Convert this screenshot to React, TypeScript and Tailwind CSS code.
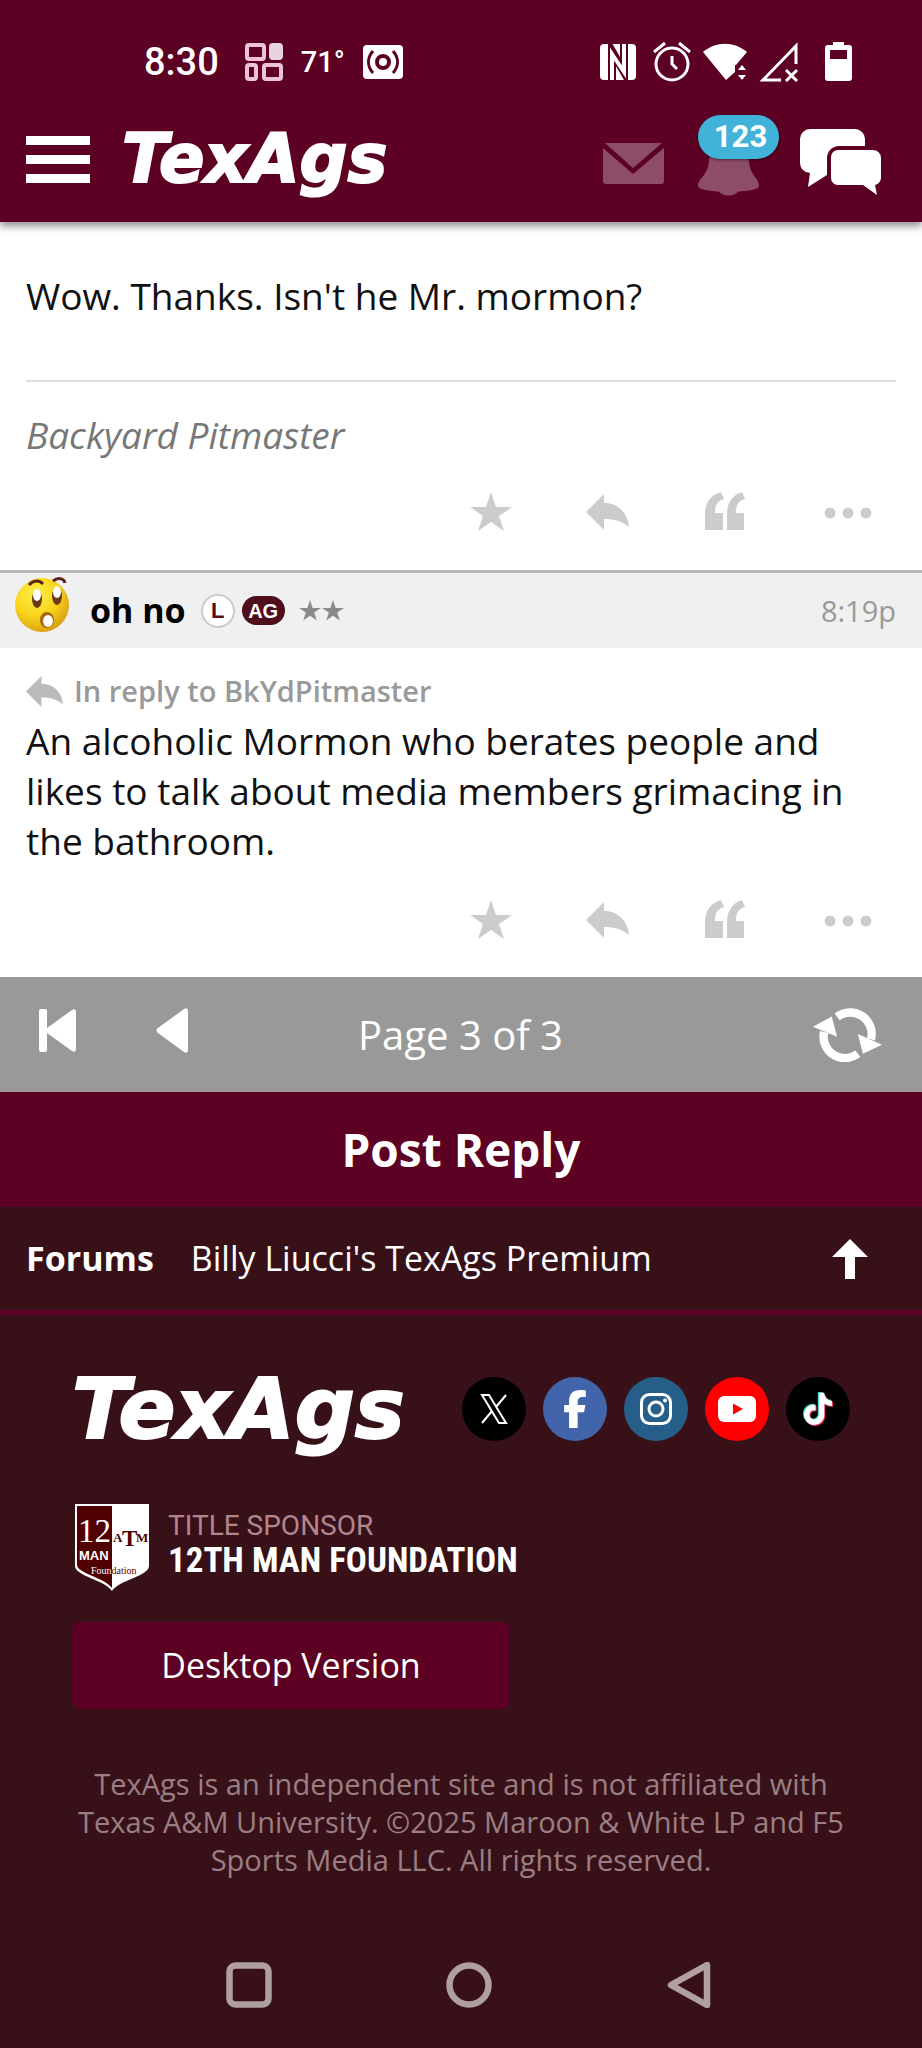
import type { ReactNode } from "react";
import { FaFacebookF, FaTiktok } from "react-icons/fa6";

const sans = "font-['Open_Sans',sans-serif]";
const roboto = "font-['Roboto',sans-serif]";
const wordmark = "font-['DejaVu_Sans',sans-serif] font-bold italic leading-[76px] text-white [-webkit-text-stroke:2px_white]";

function StatusBar() {
  return (
    <div className={`${roboto} flex h-[40px] items-center justify-between pl-[144px] pr-[70px] text-white`}>
      <div className="flex items-center">
        <span className="text-[38px] font-medium leading-[40px]">8:30</span>
        <svg className="ml-[26px] h-[38px] w-[38px]" viewBox="0 0 38 38" fill="none" stroke="#efc3d6" strokeWidth="4">
          <rect x="2" y="2" width="17" height="14" rx="2" />
          <rect x="25" y="1" width="12" height="15" rx="3" fill="#e6d5de" stroke="#e6d5de" strokeWidth="2" />
          <rect x="2" y="22" width="9" height="14" rx="2" />
          <rect x="19" y="22" width="17" height="14" rx="2" />
        </svg>
        <span className="ml-[18px] text-[29px] font-medium leading-[40px]">71°</span>
        <svg className="ml-[18px] h-[34px] w-[40px]" viewBox="0 0 40 34" fill="none">
          <rect width="40" height="34" rx="4" fill="#fff" />
          <circle cx="20" cy="17" r="6" stroke="#5c0024" strokeWidth="4" />
          <path d="M10 6c-6 7-6 15 0 22M30 6c6 7 6 15 0 22" stroke="#5c0024" strokeWidth="3" />
        </svg>
      </div>

      <div className="flex items-center">
        {/* nfc */}
        <svg className="h-[40px] w-[36px]" viewBox="0 0 36 40" fill="none">
          <rect y="2" width="36" height="36" rx="4" fill="#fff" />
          <path d="M12 38V9l12 21V2" stroke="#5c0024" strokeWidth="8" />
          <path d="M12 38V12l12 18V2" stroke="#fff" strokeWidth="4" />
        </svg>
        {/* alarm */}
        <svg className="ml-[16px] h-[40px] w-[40px]" viewBox="0 0 40 40" fill="none" stroke="#fff" strokeWidth="3">
          <circle cx="20" cy="22" r="16" />
          <path d="M20 14v8l5 5M2 10l11-9M27 1l11 9" />
        </svg>
        {/* wifi */}
        <svg className="ml-[11px] h-[40px] w-[44px]" viewBox="0 0 44 40" fill="#fff">
          <path d="M0 10C13-1 31-1 44 10L33 23h-1v7l-9 8z" />
          <path d="M35 28l4-5 4 5zM35 33l4 5 4-5z" />
        </svg>
        {/* signal, no service */}
        <svg className="ml-[12px] h-[40px] w-[40px]" viewBox="0 0 40 40" fill="none" stroke="#fff" strokeWidth="3">
          <path d="M22 38H4L37 4v18" />
          <path d="M27 28l11 11M38 28L27 39" />
        </svg>
        {/* battery */}
        <svg className="ml-[26px] h-[40px] w-[27px]" viewBox="0 0 27 40">
          <path fill="#fff" fillRule="evenodd" d="M8 0h11v3h5a3 3 0 0 1 3 3v30a3 3 0 0 1-3 3H3a3 3 0 0 1-3-3V6a3 3 0 0 1 3-3h5zM5 8v9h17V8z" />
        </svg>
      </div>
    </div>
  );
}

function SiteHeader() {
  return (
    <header className="relative z-10 bg-[#5c0024] pt-[42px] shadow-[0_4px_8px_rgba(0,0,0,0.45)]">
      <StatusBar />
      <div className="flex h-[140px] items-end justify-between pb-[25px] pl-[26px] pr-[41px]">
        <div className="flex items-center">
          <button aria-label="Menu" className="flex w-[64px] flex-col gap-[10px]">
            <span className="h-[9px] bg-white" />
            <span className="h-[9px] bg-white" />
            <span className="h-[9px] bg-white" />
          </button>
          <a href="#" className={`${wordmark} ml-[32px] text-[67px]`}>
            TexAgs
          </a>
        </div>

        <div className="flex items-end">
          <button aria-label="Messages">
            <svg className="h-[68px] w-[61px]" viewBox="0 0 61 68" fill="#8d4d68">
              <path d="M2 14h57L30 39zM0 19l30 26 31-26v33a3 3 0 0 1-3 3H3a3 3 0 0 1-3-3z" />
            </svg>
          </button>
          <button aria-label="Notifications" className="relative ml-[34px]">
            <svg className="h-[68px] w-[62px]" viewBox="0 0 63 68" fill="#8d4d68">
              <path d="M31 8C16 8 12 20 11 34 10 46 0 50 0 57c0 4 10 5 21 6 2 3 6 4 10 4s8-1 10-4c11-1 21-2 21-6 0-7-9-11-10-23C51 20 46 8 31 8z" />
            </svg>
            <span
              className={`${roboto} absolute bottom-[38px] left-0 flex h-[44px] w-[81px] items-center justify-center rounded-full bg-[#42b3d8] pl-1 text-[31px] font-bold text-white shadow-[0_1px_3px_rgba(0,0,0,0.5)]`}
            >
              123
            </span>
          </button>
          <button aria-label="Forums" className="ml-[40px]">
            <svg className="h-[68px] w-[81px]" viewBox="0 0 81 68" fill="#fff">
              <path d="M10 0h45a10 10 0 0 1 10 10v7H39a12 12 0 0 0-12 12v17L8 58l2-14a10 10 0 0 1-10-10V10A10 10 0 0 1 10 0z" />
              <path d="M38 21h35a8 8 0 0 1 8 8v19a8 8 0 0 1-6 8l2 10-14-10H38a7 7 0 0 1-7-7V28a7 7 0 0 1 7-7z" />
            </svg>
          </button>
        </div>
      </div>
    </header>
  );
}

function ReplyArrow({ className }: { className: string }) {
  return (
    <svg className={className} viewBox="0 0 43 36" fill="currentColor">
      <path d="M0 18L18 0v9c14 0 24 10 25 24-7-6-15-8-25-8v11z" />
    </svg>
  );
}

function PostActions() {
  return (
    <div className="flex h-[40px] items-center justify-end pr-[24px] text-[#ccc]">
      <button aria-label="Star">
        <svg className="h-[40px] w-[42px]" viewBox="0 0 42 40" fill="currentColor">
          <path d="M21 0l5 15h16L29 24l5 15-13-9-13 9 5-15L0 15h16z" />
        </svg>
      </button>
      <button aria-label="Reply" className="ml-[74px]">
        <ReplyArrow className="h-[36px] w-[43px]" />
      </button>
      <button aria-label="Quote" className="ml-[76px]">
        <svg className="h-[40px] w-[40px]" viewBox="0 0 40 40" fill="currentColor">
          <path d="M0 38V22C0 10 6 3 16 0l3 7c-7 2-9 6-9 14h8v17z" />
          <path d="M22 38V22C22 10 28 3 37 0l3 7c-7 2-9 6-9 14h8v17z" />
        </svg>
      </button>
      <button aria-label="More" className="ml-[79px]">
        <svg className="h-[40px] w-[48px]" viewBox="0 0 48 40" fill="currentColor">
          <circle cx="6" cy="21" r="5.5" />
          <circle cx="24" cy="21" r="5.5" />
          <circle cx="42" cy="21" r="5.5" />
        </svg>
      </button>
    </div>
  );
}

function Avatar() {
  return (
    <svg className="h-[56px] w-[56px]" viewBox="0 0 56 56">
      <defs>
        <radialGradient id="face" cx="0.38" cy="0.3" r="0.75">
          <stop offset="0" stopColor="#fff04a" />
          <stop offset="0.55" stopColor="#f8d41a" />
          <stop offset="1" stopColor="#d99a12" />
        </radialGradient>
      </defs>
      <circle cx="28" cy="28" r="27" fill="url(#face)" />
      <path d="M15 8c4-5 10-5 14-1M39 4c5-4 11-3 12 2" fill="none" stroke="#5e2413" strokeWidth="3" />
      <ellipse cx="23" cy="22" rx="5" ry="9" fill="#6b3a16" />
      <ellipse cx="23" cy="18" rx="4" ry="6" fill="#fff" />
      <ellipse cx="43" cy="19" rx="5" ry="9" fill="#6b3a16" />
      <ellipse cx="43" cy="15" rx="4" ry="6" fill="#fff" />
      <ellipse cx="33" cy="43" rx="7" ry="8" fill="#a8660f" />
      <ellipse cx="34" cy="44" rx="5" ry="6" fill="#fff" />
    </svg>
  );
}

function Star() {
  return (
    <svg className="h-[21px] w-[22px]" viewBox="0 0 42 40" fill="#8b8b8b">
      <path d="M21 0l5 15h16L29 24l5 15-13-9-13 9 5-15L0 15h16z" />
    </svg>
  );
}

function Pager() {
  return (
    <nav className="grid h-[115px] grid-cols-3 items-center bg-[#999] pl-[39px] pr-[40px] text-white">
      <div className="flex items-center pb-2">
        <button aria-label="First page">
          <svg className="h-[45px] w-[37px]" viewBox="0 0 37 45" fill="#fff">
            <rect y="1" width="8" height="43" rx="2" />
            <path d="M8 20L33 2q4-2 4 2v37q0 4-4 2L8 25z" />
          </svg>
        </button>
        <button aria-label="Previous page" className="ml-[80px]">
          <svg className="h-[45px] w-[32px]" viewBox="0 0 32 45" fill="#fff">
            <path d="M2 20L28 1q4-2 4 2v39q0 4-4 2L2 25q-3-3 0-5z" />
          </svg>
        </button>
      </div>
      <span className="text-center text-[40px] leading-[50px]">Page 3 of 3</span>
      <button aria-label="Refresh" className="justify-self-end">
        <svg className="h-[54px] w-[69px]" viewBox="1056 143 206 160" fill="none" stroke="#fff" strokeWidth="25">
          <path d="M1128 169A64 64 0 0 1 1229 236" />
          <path d="M1089 214A64 64 0 0 0 1190 279" />
          <path d="M1190 220L1262 252 1205 279zM1056 198L1112 168 1128 228z" fill="#fff" stroke="none" />
        </svg>
      </button>
    </nav>
  );
}

function Social({ label, color, children }: { label: string; color: string; children: ReactNode }) {
  return (
    <a href="#" aria-label={label} className={`flex size-[64px] items-center justify-center rounded-full text-white ${color}`}>
      {children}
    </a>
  );
}

function SponsorShield() {
  return (
    <svg className="h-[90px] w-[76px]" viewBox="0 0 76 90">
      <path d="M1 1h74v62c0 10-30 14-37 25C31 77 1 73 1 63z" fill="#fff" />
      <path d="M3 3h35v82C31 75 3 70 3 62z" fill="#500000" />
      <text x="4" y="39" fontSize="33" fill="#fff" fontFamily="Liberation Serif, serif">
        12
      </text>
      <text x="5" y="57" fontSize="13" fontWeight="700" fill="#fff" fontFamily="Liberation Sans, sans-serif">
        MAN
      </text>
      <g fill="#500000" fontWeight="700" fontFamily="Liberation Serif, serif">
        <text x="39" y="39" fontSize="13">
          A
        </text>
        <text x="48" y="43" fontSize="23">
          T
        </text>
        <text x="62" y="39" fontSize="13">
          M
        </text>
      </g>
      <text x="17" y="71" fontSize="10" fill="#fff" fontFamily="Liberation Serif, serif">
        Foun<tspan fill="#500000">dation</tspan>
      </text>
    </svg>
  );
}

function Footer() {
  return (
    <footer className="px-[72px] pt-[56px]">
      <div className="flex items-center justify-between">
        <a href="#" className={`${wordmark} text-[84px]`}>
          TexAgs
        </a>
        <div className="flex gap-[17px]">
          <Social label="X" color="bg-black">
            <svg className="h-[30px] w-[28px]" viewBox="0 0 28 30" fill="none" stroke="#fff" strokeWidth="2">
              <path d="M2 1h7l17 28h-7zM26 1L16 13M12 17L2 29" />
            </svg>
          </Social>
          <Social label="Facebook" color="bg-[#4164ab]">
            <FaFacebookF className="size-[38px]" />
          </Social>
          <Social label="Instagram" color="bg-[#265e8a]">
            <svg className="size-[32px]" viewBox="0 0 32 32" fill="none" stroke="#fff" strokeWidth="3">
              <rect x="1.5" y="1.5" width="29" height="29" rx="8" />
              <circle cx="16" cy="16" r="7" />
              <circle cx="25" cy="7.5" r="2" fill="#fff" stroke="none" />
            </svg>
          </Social>
          <Social label="YouTube" color="bg-[#fe0000]">
            <svg className="h-[26px] w-[38px]" viewBox="0 0 38 26">
              <rect width="38" height="26" rx="6" fill="#fff" />
              <path d="M15 7.500v11l10-5.500z" fill="#fe0000" />
            </svg>
          </Social>
          <Social label="TikTok" color="bg-black">
            <span className="relative size-[32px]">
              <FaTiktok className="absolute -left-px -top-px size-[32px] text-[#3fd6c8]" />
              <FaTiktok className="absolute left-px top-px size-[32px] text-[#e8305c]" />
              <FaTiktok className="absolute left-0 top-0 size-[32px]" />
            </span>
          </Social>
        </div>
      </div>

      <a href="#" className="mt-[56px] flex items-center pl-[2px]">
        <SponsorShield />
        <span className="ml-[18px] flex flex-col pb-2">
          <span className={`${roboto} text-[28px] leading-[34px] text-[#b2858f]`}>TITLE SPONSOR</span>
          <span className="font-['Liberation_Sans_Narrow','Roboto_Condensed',Roboto,sans-serif] text-[35px] font-bold leading-[36px] text-white">
            12TH MAN FOUNDATION
          </span>
        </span>
      </a>

      <button className="mt-[29px] h-[87px] w-[438px] rounded-lg bg-[#5c0024] text-[34px] text-white">Desktop Version</button>

      <p className="mt-[56px] text-center text-[29px] leading-[38px] text-[#9a7f84]">
        TexAgs is an independent site and is not affiliated with Texas A&M University. ©2025 Maroon & White LP and F5
        Sports Media LLC. All rights reserved.
      </p>
    </footer>
  );
}

function AndroidNav() {
  return (
    <div className="mt-[83px] flex justify-center gap-[174px] pb-[40px] pl-[16px]">
      <button aria-label="Recent apps">
        <svg className="size-[46px]" viewBox="0 0 46 46" fill="none" stroke="#b09fa2" strokeWidth="6.5">
          <rect x="3.5" y="3.5" width="39" height="39" rx="6" />
        </svg>
      </button>
      <button aria-label="Home">
        <svg className="size-[46px]" viewBox="0 0 46 46" fill="none" stroke="#b09fa2" strokeWidth="6.5">
          <circle cx="23" cy="23" r="19.5" />
        </svg>
      </button>
      <button aria-label="Back">
        <svg className="size-[46px]" viewBox="0 0 46 46" fill="none" stroke="#b09fa2" strokeWidth="6.5" strokeLinejoin="round">
          <path d="M5 23L41 3v40z" />
        </svg>
      </button>
    </div>
  );
}

export default function App() {
  return (
    <div className={`${sans} min-h-screen bg-[#381118]`}>
      <SiteHeader />

      <main className="bg-white">
        {/* First post */}
        <article className="px-[26px] pb-[38px] pt-[49px]">
          <p className="text-[37px] leading-[50px] text-[#111]">Wow. Thanks. Isn't he Mr. mormon?</p>
          <hr className="mt-[59px] border-t-2 border-[#dedede]" />
          <p className="mb-[32px] mt-[28px] text-[37px] italic leading-[50px] text-[#777]">Backyard Pitmaster</p>
          <PostActions />
        </article>

        {/* Second post */}
        <article>
          <header className="flex h-[78px] items-center border-t-[3px] border-[#b8b8b8] bg-[#f0f0f0] pl-[14px] pr-[26px]">
            <div className="self-start pt-1">
              <Avatar />
            </div>
            <a href="#" className="ml-[20px] text-[34px] font-bold text-black">
              oh no
            </a>
            <span className="ml-[15px] flex size-[34px] items-center justify-center rounded-full border-2 border-[#ccc] bg-white font-['Liberation_Sans',sans-serif] text-[22px] font-bold text-[#500d1c]">
              L
            </span>
            <span className="ml-[7px] flex h-[29px] w-[43px] items-center justify-center rounded-full bg-[#500d1c] font-['Liberation_Sans',sans-serif] text-[20px] font-bold text-white">
              AG
            </span>
            <span className="ml-[14px] flex gap-px">
              <Star />
              <Star />
            </span>
            <time className="ml-auto text-[29px] text-[#999]">8:19p</time>
          </header>
          <div className="px-[26px] pb-[37px] pt-[24px]">
            <a href="#" className="flex items-center text-[29px] font-semibold leading-[38px] text-[#999]">
              <ReplyArrow className="mr-[11px] h-[31px] w-[37px] text-[#bbb]" />
              In reply to BkYdPitmaster
            </a>
            <p className="mb-[34px] mt-[6px] text-[37px] leading-[50px] text-[#111]">
              An alcoholic Mormon who berates people and likes to talk about media members grimacing in the bathroom.
            </p>
            <PostActions />
          </div>
        </article>
      </main>

      <Pager />
      <button className="block h-[115px] w-full bg-[#5c0024] text-[46px] font-bold text-white">Post Reply</button>

      <nav className="flex h-[108px] items-center border-b-[5px] border-[#5c0024] pl-[26px] pr-[54px] text-[34px] text-white">
        <a href="#" className="font-bold">
          Forums
        </a>
        <a href="#" className="ml-[37px]">
          Billy Liucci's TexAgs Premium
        </a>
        <button aria-label="Back to top" className="ml-auto">
          <svg className="h-[40px] w-[36px]" viewBox="0 0 36 40" fill="#fff">
            <path d="M18 0l18 18H23v22H13V18H0z" />
          </svg>
        </button>
      </nav>

      <Footer />
      <AndroidNav />
    </div>
  );
}
